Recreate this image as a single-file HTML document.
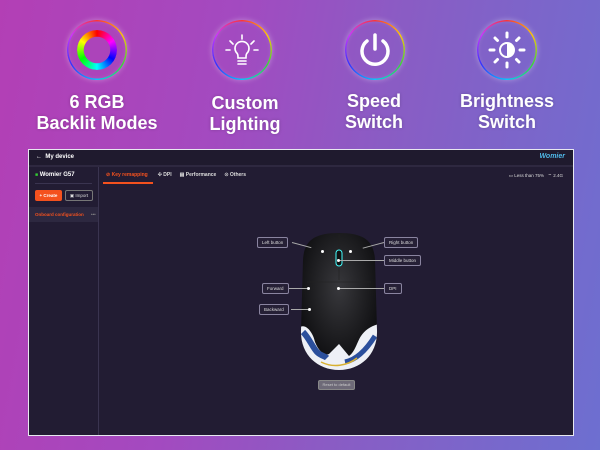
<!DOCTYPE html>
<html><head><meta charset="utf-8"><style>
*{margin:0;padding:0;box-sizing:border-box}
body{width:600px;height:450px;overflow:hidden;position:relative;font-family:"Liberation Sans",sans-serif;
background:linear-gradient(100deg,#b33fb5 0%,#a34ac0 35%,#8a5cc4 60%,#6d6fd0 100%);}
.hl{position:absolute;color:#fff;font-weight:bold;font-size:18px;line-height:21px;text-align:center;width:160px;text-shadow:0 0 3px rgba(0,0,0,.2)}
.ring{position:absolute;width:60px;height:60px;border-radius:50%;background:conic-gradient(#f33,#fc0,#3d3,#0cf,#33f,#c3f,#f33);-webkit-mask:radial-gradient(circle,transparent 28.3px,#000 28.8px);mask:radial-gradient(circle,transparent 28.3px,#000 28.8px)}
.glow{position:absolute;width:60px;height:60px;border-radius:50%;box-shadow:0 0 6px rgba(255,255,255,.35),inset 0 0 6px rgba(255,255,255,.2)}
.ico{position:absolute;width:60px;height:60px;display:flex;align-items:center;justify-content:center}
.win{position:absolute;left:28px;top:149px;width:546px;height:287px;border:1.5px solid #e8e8f0;background:#221c33;}
.tb{height:17px;border-bottom:2px solid #2e2840;background:#1f1a2e;color:#fff;font-size:6px;font-weight:bold;padding:4px 0 0 7px}
.side{position:absolute;left:0;top:17px;width:70px;bottom:0;border-right:1.5px solid #3a3450;background:#221c33}
.lbl{position:absolute;background:#262036;border:1px solid #8a84a0;border-radius:2px;color:#ddd;font-size:4.5px;padding:2px 4px;height:11px;line-height:6px;white-space:nowrap}
.ln{position:absolute;height:1px;background:#aaa}
.dot{position:absolute;width:3px;height:3px;border-radius:50%;background:#fff}
</style></head><body>
<div class="glow" style="left:67px;top:20px"></div><div class="ring" style="left:67px;top:20px"></div>
<div class="glow" style="left:212px;top:20px"></div><div class="ring" style="left:212px;top:20px"></div>
<div class="glow" style="left:345px;top:20px"></div><div class="ring" style="left:345px;top:20px"></div>
<div class="glow" style="left:477px;top:20px"></div><div class="ring" style="left:477px;top:20px"></div>
<div class="ico" style="left:67px;top:20px"><div style="width:40px;height:40px;border-radius:50%;background:conic-gradient(#f00,#f0f,#00f,#0ff,#0f0,#ff0,#f00);-webkit-mask:radial-gradient(circle,transparent 13px,#000 13.5px);mask:radial-gradient(circle,transparent 13px,#000 13.5px)"></div></div>
<div class="ico" style="left:212px;top:20px"><svg width="36" height="36" viewBox="0 0 36 36" fill="none" stroke="#fff" stroke-width="1.6" stroke-linecap="round"><path d="M18 3v4M6 9l3 3M30 9l-3 3M2 18h4M30 18h4"/><path d="M12 20a7 7 0 1 1 12 0c-2 2-2 3-2 6h-8c0-3 0-4-2-6z"/><path d="M14 29h8M14 32h8"/></svg></div>
<div class="ico" style="left:345px;top:20px"><svg width="40" height="40" viewBox="0 0 40 40" fill="none" stroke="#fff" stroke-width="3.5" stroke-linecap="round"><path d="M12 11a13 13 0 1 0 16 0"/><path d="M20 5v14"/></svg></div>
<div class="ico" style="left:477px;top:20px"><svg width="42" height="42" viewBox="0 0 42 42" fill="#fff" stroke="#fff" stroke-width="3" stroke-linecap="round"><path d="M21 4v4M21 34v4M4 21h4M34 21h4M9 9l2.5 2.5M33 9l-2.5 2.5M9 33l2.5-2.5M33 33l-2.5-2.5" fill="none"/><circle cx="21" cy="21" r="7" fill="none" stroke-width="2"/><path d="M21 14a7 7 0 0 1 0 14z" stroke="none"/></svg></div>
<div class="hl" style="left:17px;top:92px">6 RGB<br>Backlit Modes</div>
<div class="hl" style="left:165px;top:93px">Custom<br>Lighting</div>
<div class="hl" style="left:294px;top:91px">Speed<br>Switch</div>
<div class="hl" style="left:427px;top:91px">Brightness<br>Switch</div>
<div class="win">
<div class="tb">&#8592;&nbsp; My device<span style="position:absolute;right:8px;top:3px;color:#4fb8e8;font-style:italic;font-size:7px">Womier</span></div>
<div class="side">
<div style="color:#fff;font-size:6px;font-weight:bold;padding:5px 0 0 6px"><span style="color:#3c3;font-size:5px">■</span> Womier G57</div>
<div style="margin:5px 6px 0;height:1px;background:#3a3450"></div>
<div style="position:absolute;left:6px;top:23px;width:27px;height:11px;background:#f4511e;border-radius:2px;color:#fff;font-size:4.5px;font-weight:bold;line-height:11px;text-align:center">+ Create</div>
<div style="position:absolute;left:36px;top:23px;width:28px;height:11px;border:1px solid #777;border-radius:2px;color:#ddd;font-size:4.5px;line-height:9px;text-align:center">▣ Import</div>
<div style="position:absolute;left:0;top:40px;width:69px;height:15px;background:#2d2840;color:#f4511e;font-size:4.5px;font-weight:bold;line-height:15px;padding-left:6px">Onboard configuration <span style="color:#888;margin-left:6px">•••</span></div>
</div>
<div style="position:absolute;left:72px;top:22px;font-size:5px;font-weight:bold;color:#ddd;white-space:nowrap">
<span style="color:#f4511e;margin-left:5px">⊘ Key remapping</span><span style="margin-left:10px">✣ DPI</span><span style="margin-left:8px">▤ Performance</span><span style="margin-left:8px">⊙ Others</span></div>
<div style="position:absolute;left:74px;top:32px;width:50px;height:1.5px;background:#f4511e"></div>
<div style="position:absolute;right:10px;top:23px;font-size:4.5px;color:#ddd;white-space:nowrap">▭ Less than 75% &nbsp; ⌔ 2.4G</div>
<svg style="position:absolute;left:270px;top:82px" width="80" height="140" viewBox="0 0 80 140">
<defs><radialGradient id="g" cx=".5" cy=".4" r=".6"><stop offset="0" stop-color="#38383c"/><stop offset="1" stop-color="#0c0c0e"/></radialGradient>
<clipPath id="c"><path d="M40 1C16 1 5 8 4 28L2 98C1 122 18 138 40 138C62 138 79 122 78 98L76 28C75 8 64 1 40 1Z"/></clipPath></defs>
<path d="M40 1C16 1 5 8 4 28L2 98C1 122 18 138 40 138C62 138 79 122 78 98L76 28C75 8 64 1 40 1Z" fill="url(#g)"/>
<g clip-path="url(#c)">
<path d="M0 96C6 90 14 100 16 110C20 120 26 124 30 122L40 112L50 124C56 120 58 110 62 104C66 98 72 94 80 92L80 140L0 140Z" fill="#eef0f6"/>
<path d="M4 100c6 6 10 16 14 20c4 4 8 4 10 6" stroke="#2b4f9c" stroke-width="6" fill="none"/>
<path d="M46 130c10-2 20-10 30-26" stroke="#2b4f9c" stroke-width="5" fill="none"/>
<path d="M22 130c12 6 26 4 36-4" stroke="#d8b030" stroke-width="1.5" fill="none"/>
</g>
<rect x="37" y="18" width="6" height="16" rx="3" fill="#111" stroke="#4ff" stroke-width="1"/>
<path d="M40 2v14M40 36v12M8 50h64" stroke="#222" stroke-width=".6"/>
</svg>
<div class="lbl" style="left:228px;top:87px">Left button</div>
<div class="lbl" style="left:355px;top:87px">Right button</div>
<div class="lbl" style="left:355px;top:105px">Middle button</div>
<div class="lbl" style="left:233px;top:133px">Forward</div>
<div class="lbl" style="left:355px;top:133px">DPI</div>
<div class="lbl" style="left:230px;top:154px">Backward</div>
<div class="ln" style="left:263px;top:92px;width:20px;transform:rotate(15deg);transform-origin:left"></div>
<div class="ln" style="left:333px;top:92px;width:22px;transform:rotate(-15deg);transform-origin:right"></div>
<div class="ln" style="left:310px;top:110px;width:45px"></div>
<div class="ln" style="left:260px;top:138px;width:18px"></div>
<div class="ln" style="left:310px;top:138px;width:45px"></div>
<div class="ln" style="left:262px;top:159px;width:17px"></div>
<div class="dot" style="left:292px;top:100px"></div>
<div class="dot" style="left:320px;top:100px"></div>
<div class="dot" style="left:308px;top:109px"></div>
<div class="dot" style="left:278px;top:137px"></div>
<div class="dot" style="left:308px;top:137px"></div>
<div class="dot" style="left:279px;top:158px"></div>
<div style="position:absolute;left:289px;top:230px;width:37px;height:10px;background:#6e6a78;border:1px solid #888;border-radius:2px;color:#ccc;font-size:4px;line-height:8px;text-align:center">Reset to default</div>
</div>
</body></html>
